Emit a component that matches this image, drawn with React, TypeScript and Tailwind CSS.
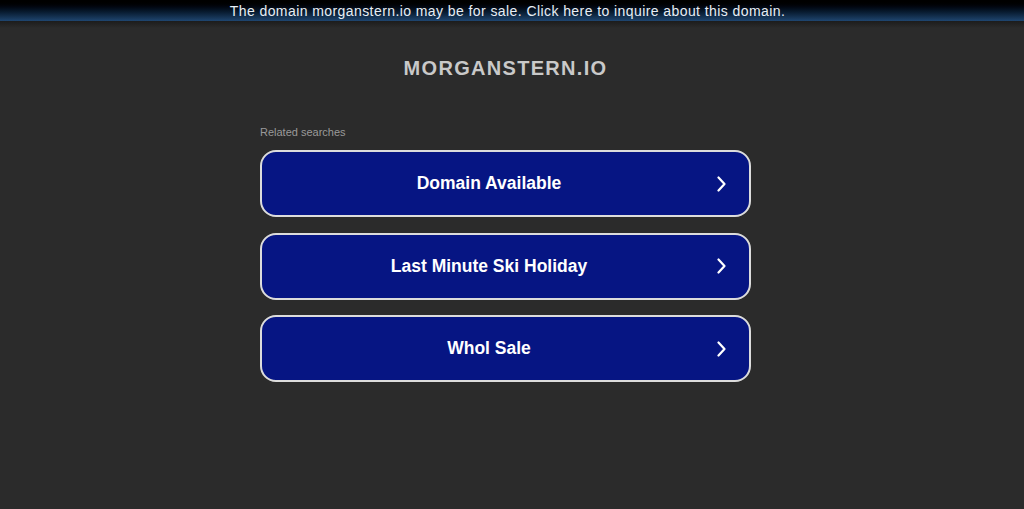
import React from "react";

const items = ["Domain Available", "Last Minute Ski Holiday", "Whol Sale"];

function Chevron() {
  return (
    <svg width="12" height="16" viewBox="0 0 12 16" className="shrink-0 mr-[21px]">
      <path d="M2.5 1.5 L8.5 8 L2.5 14.5" fill="none" stroke="#ffffff" strokeWidth="2.2" strokeLinecap="round" strokeLinejoin="round" />
    </svg>
  );
}

export default function App() {
  return (
    <div className="min-h-[509px] w-full bg-[#2b2b2b] flex flex-col" style={{ fontFamily: '"Liberation Sans", Arial, sans-serif' }}>
      <div className="h-[21px] w-full bg-gradient-to-b from-[#000000] to-[#1f4670] flex items-center justify-center pr-[9px] text-[14px] tracking-[0.42px] text-[#e8eef5] leading-none">
        The domain morganstern.io may be for sale. Click here to inquire about this domain.
      </div>
      <div className="h-[7px] w-full bg-gradient-to-b from-[#1c1c1c] to-[#2b2b2b]" />
      <div className="w-[1011px] flex flex-col">
        <div className="flex justify-center pt-[30px]">
          <h1 className="text-[20px] font-bold tracking-[1.3px] text-[#c9c9c9] leading-none">MORGANSTERN.IO</h1>
        </div>
        <div className="w-[491px] mx-auto pt-[49px] flex flex-col">
          <div className="text-[11px] text-[#9a9a9a] leading-none">Related searches</div>
          <div className="flex flex-col gap-[15.5px] pt-[12px]">
            {items.map((t) => (
              <div
                key={t}
                className="h-[67px] rounded-[16px] border-2 border-[#dcdcdc] bg-[#061583] flex items-center text-white font-bold text-[17.5px]"
              >
                <span className="flex-1 text-center">{t}</span>
                <Chevron />
              </div>
            ))}
          </div>
        </div>
      </div>
    </div>
  );
}
